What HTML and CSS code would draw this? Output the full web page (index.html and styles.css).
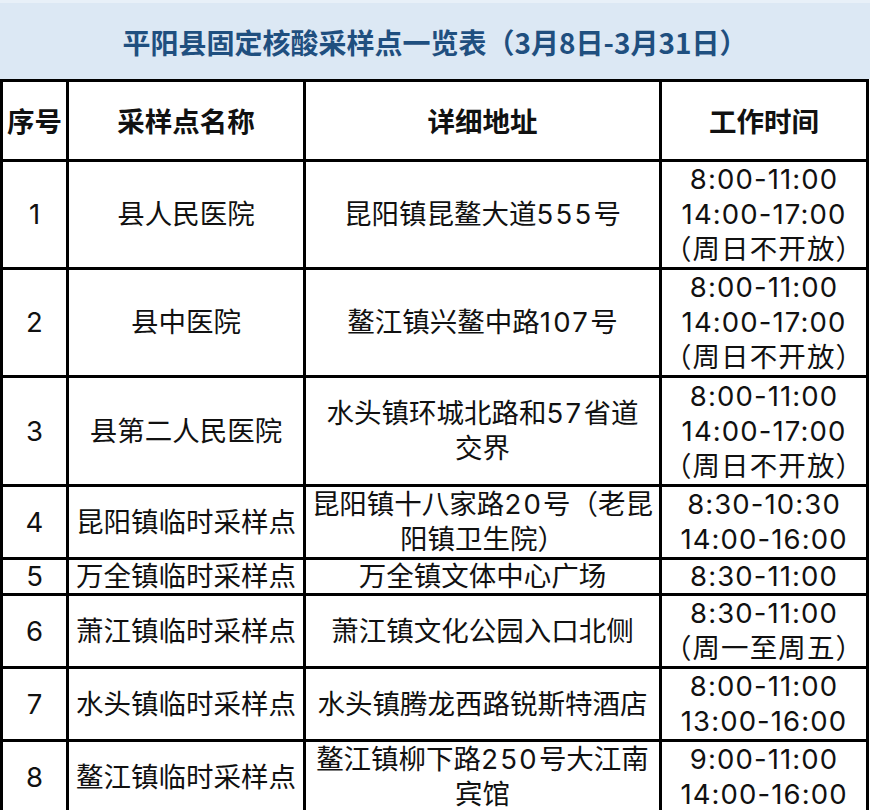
FILE: index.html
```html
<!DOCTYPE html>
<html lang="zh-CN">
<head>
<meta charset="utf-8">
<title>平阳县固定核酸采样点一览表</title>
<link rel="stylesheet" href="styles.css">
</head>
<body>
<div class="title">平阳县固定核酸采样点一览表（3月8日-3月31日）</div>
<table class="grid">
  <colgroup>
    <col class="c-no">
    <col class="c-name">
    <col class="c-addr">
    <col class="c-time">
  </colgroup>
  <thead>
    <tr class="r-head">
      <th>序号</th><th>采样点名称</th><th>详细地址</th><th>工作时间</th>
    </tr>
  </thead>
  <tbody>
    <tr class="r-105">
      <td>1</td><td>县人民医院</td><td>昆阳镇昆鳌大道<span class="num">555</span>号</td>
      <td class="time">8:00-11:00<br>14:00-17:00<br>（周日不开放）</td>
    </tr>
    <tr class="r-105">
      <td>2</td><td>县中医院</td><td>鳌江镇兴鳌中路<span class="num">107</span>号</td>
      <td class="time">8:00-11:00<br>14:00-17:00<br>（周日不开放）</td>
    </tr>
    <tr class="r-106">
      <td>3</td><td>县第二人民医院</td><td>水头镇环城北路和<span class="num">57</span>省道<br>交界</td>
      <td class="time">8:00-11:00<br>14:00-17:00<br>（周日不开放）</td>
    </tr>
    <tr class="r-69">
      <td>4</td><td>昆阳镇临时采样点</td><td>昆阳镇十八家路<span class="num">20</span>号（老昆<br>阳镇卫生院）</td>
      <td class="time">8:30-10:30<br>14:00-16:00</td>
    </tr>
    <tr class="r-33">
      <td>5</td><td>万全镇临时采样点</td><td>万全镇文体中心广场</td>
      <td class="time">8:30-11:00</td>
    </tr>
    <tr class="r-69">
      <td>6</td><td>萧江镇临时采样点</td><td>萧江镇文化公园入口北侧</td>
      <td class="time">8:30-11:00<br>（周一至周五）</td>
    </tr>
    <tr class="r-69">
      <td>7</td><td>水头镇临时采样点</td><td>水头镇腾龙西路锐斯特酒店</td>
      <td class="time">8:00-11:00<br>13:00-16:00</td>
    </tr>
    <tr class="r-68">
      <td>8</td><td>鳌江镇临时采样点</td><td>鳌江镇柳下路<span class="num">250</span>号大江南<br>宾馆</td>
      <td class="time">9:00-11:00<br>14:00-16:00</td>
    </tr>
  </tbody>
</table>
</body>
</html>
```
FILE: styles.css
```css
html, body {
  margin: 0;
  padding: 0;
  background: #ffffff;
}

body {
  width: 870px;
  font-family: Inter, "Noto Sans CJK SC", sans-serif;
  color: #111111;
}

.title {
  height: 76px;
  border-top: 3px solid #e8f0f8;
  background: #dce8f4;
  color: #1f4f7f;
  font-family: "Noto Sans CJK SC", sans-serif;
  font-weight: 700;
  font-size: 28px;
  line-height: 78px;
  text-align: center;
}

.grid {
  width: 869px;
  table-layout: fixed;
  border-collapse: separate;
  border-spacing: 3px;
  background: #000000;
}

.c-no { width: 63px; }
.c-name { width: 234px; }
.c-addr { width: 353px; }
.c-time { width: 204px; }

.grid th,
.grid td {
  background: #ffffff;
  padding: 0;
  text-align: center;
  vertical-align: middle;
  font-size: 27.5px;
  line-height: 35px;
  white-space: nowrap;
}

.grid th {
  font-family: "Noto Sans CJK SC", sans-serif;
  font-weight: 700;
  color: #111111;
}

.num {
  letter-spacing: 2.3px;
}

.time {
  letter-spacing: 1.1px;
  font-feature-settings: "halt";
}

.r-head th { height: 77px; }
.r-105 td { height: 105px; }
.r-106 td { height: 106px; }
.r-69 td { height: 69px; }
.r-68 td { height: 68px; }
.r-33 td { height: 33px; line-height: 33px; }
```
